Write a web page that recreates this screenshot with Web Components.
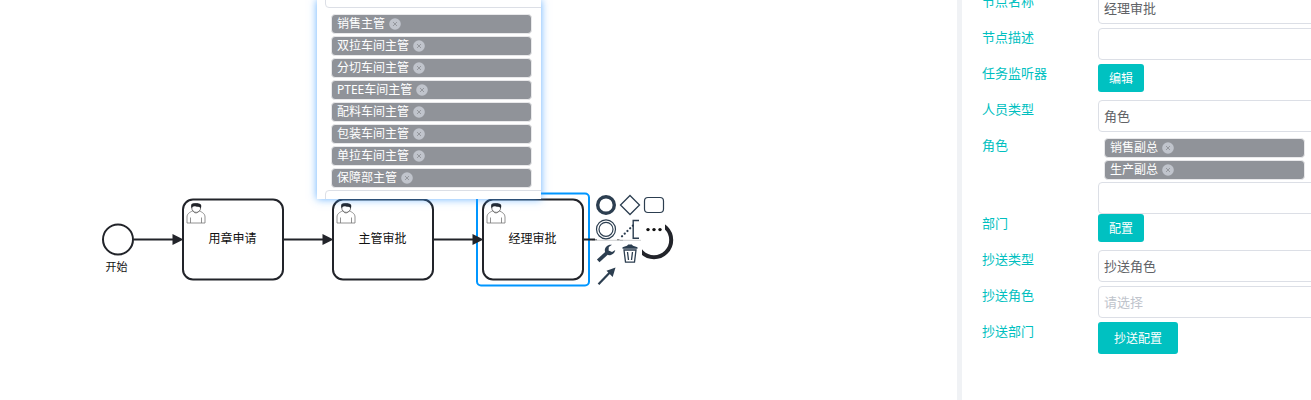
<!DOCTYPE html>
<html lang="zh">
<head>
<meta charset="utf-8">
<title>流程设计</title>
<style>
html,body{margin:0;height:400px;overflow:hidden;background:#fff;font-family:"Noto Sans","Noto Sans CJK SC",sans-serif}
</style>
</head>
<body>
<flow-designer></flow-designer>
<script>
const define = (name, css, html) => customElements.define(name, class extends HTMLElement {
  connectedCallback() {
    if (this.shadowRoot) return;
    const t = document.createElement('template');
    t.innerHTML = `<style>*{box-sizing:border-box}${css}</style>${typeof html === 'function' ? html(this) : html}`;
    this.attachShadow({mode: 'open'}).appendChild(t.content.cloneNode(true));
  }
});

define('role-tag', `
:host{display:flex;align-items:center;box-sizing:border-box;height:20px;width:201px;margin-bottom:2px;padding:0 5px;border:1px solid #e9e9eb;border-radius:4px;background:#909399;color:#fff;font-size:12px;line-height:18px;white-space:nowrap}
svg{width:12px;height:12px;margin-left:4px;flex:none}`,
`<slot></slot><svg viewBox="0 0 12 12"><circle cx="6" cy="6" r="5.800" fill="#c0c4cc"/><path d="M4 4l4 4M8 4l-4 4" stroke="#909399" stroke-width=".9"/></svg>`);

define('text-box', `
:host{display:flex;align-items:center;box-sizing:border-box;width:240px;height:32px;padding:0 5px;border:1px solid #dcdfe6;border-radius:4px;background:#fff;color:#606266;font-size:13px;line-height:18px}
:host([placeholder]){color:#c0c4cc}`, `<slot></slot>`);

define('teal-button', `
:host{display:inline-flex;align-items:center;justify-content:center;box-sizing:border-box;width:46px;height:28px;padding-top:2px;border-radius:3px;background:#00c1c1;color:#fff;font-size:12px;line-height:16px}
:host([large]){width:80px;height:32px}`, `<slot></slot>`);

define('form-row', `
:host{display:flex;height:36px;align-items:flex-start}
:host([tall]){height:78px}
.l{width:116px;flex:none;color:#00bfbf;font-size:13px;line-height:18px}
.c{flex:none;display:flex;flex-direction:column;align-items:flex-start}`,
el => `<div class="l">${el.getAttribute('label')}</div><div class="c"><slot></slot></div>`);

define('property-panel', `
:host{display:block;box-sizing:border-box;width:354px;height:400px;flex:none;border-left:5px solid #f0f2f5;padding-left:20px;background:#fff;overflow:hidden}
.rows{margin-top:-8px}
.tags{padding:2px 0 0 6px;height:46px}`,
`<div class="rows">
<form-row label="节点名称"><text-box>经理审批</text-box></form-row>
<form-row label="节点描述"><text-box></text-box></form-row>
<form-row label="任务监听器"><teal-button>编辑</teal-button></form-row>
<form-row label="人员类型"><text-box>角色</text-box></form-row>
<form-row label="角色" tall><div class="tags"><role-tag>销售副总</role-tag><role-tag>生产副总</role-tag></div><text-box></text-box></form-row>
<form-row label="部门"><teal-button>配置</teal-button></form-row>
<form-row label="抄送类型"><text-box>抄送角色</text-box></form-row>
<form-row label="抄送角色"><text-box placeholder>请选择</text-box></form-row>
<form-row label="抄送部门"><teal-button large>抄送配置</teal-button></form-row>
</div>`);

define('role-popup', `
:host{display:block;width:224px;height:199px;background:#fff;box-shadow:0 0 8px rgba(64,158,255,.8)}
.in{height:199px;overflow:hidden;padding-left:8px}
.first{margin-top:-24px}
.tags{padding:6px 0 0 6px;height:182px}`,
`<div class="in"><text-box class="first"></text-box><div class="tags">
<role-tag>销售主管</role-tag><role-tag>双拉车间主管</role-tag><role-tag>分切车间主管</role-tag><role-tag>PTEE车间主管</role-tag><role-tag>配料车间主管</role-tag><role-tag>包装车间主管</role-tag><role-tag>单拉车间主管</role-tag><role-tag>保障部主管</role-tag>
</div><text-box></text-box></div>`);

const task = (x, name) => `<g transform="translate(${x} 199.5)">
<rect width="100" height="80" rx="10" fill="#fff" stroke="#22242a" stroke-width="2"/>
<path d="M4 23.500v-6c0-3 2-4.400 6-6.300c1 3 5 3 6 0c4 1.900 6 3.300 6 6.300v6zM7.500 18v5.500M18.500 18v5.500" fill="#fff" stroke="#777" stroke-width=".8"/>
<circle cx="13.200" cy="8.500" r="4.400" fill="#fff" stroke="#555" stroke-width=".8"/>
<path d="M8.500 8.800C7 2.800 10.500 3.800 13.300 3.800C17 3.800 19.300 4.500 17.900 8.800C17 7 15.500 7.800 13 6.900C10.500 6.300 9.500 7 8.500 8.800z" fill="#22242a"/>
<text x="49.500" y="43.500" font-size="12" text-anchor="middle">${name}</text></g>`;
const line = (a, b) => `<path d="M${a} 239.500H${b}" stroke="#22242a" stroke-width="2"/>`;
const flow = (a, b) => `${line(a, b - 8)}<path d="M${b - 10.500} 234v11l11-5.500z" fill="#22242a"/>`;
const cell = (x, y) => `<rect x="${x}" y="${y}" width="22" height="22" fill="#fff"/>`;

define('flow-canvas', `
:host{display:block}
svg{display:block}`,
`<svg width="957" height="400" viewBox="0 0 957 400" fill="none">
<g fill="#111" font-family="Noto Sans CJK SC,sans-serif"><circle cx="118" cy="239.500" r="15" fill="#fff" stroke="#22242a" stroke-width="2"/>
<text x="116.500" y="271" font-size="11" text-anchor="middle">开始</text>
${task(183, '用章申请')}${task(333, '主管审批')}${task(483, '经理审批')}</g>
<rect x="477" y="193.500" width="112" height="92" rx="4" stroke="#0096ff" stroke-width="2"/>
${flow(134, 183)}${flow(284, 333)}${flow(434, 483)}${line(584, 595)}
<path d="M595 240.300H640" stroke="#22242a" stroke-opacity=".22" stroke-width="1"/><path d="M592 239.700h5M617 239.700h2.500" stroke="#22242a" stroke-opacity=".6"/>
<circle cx="654" cy="240" r="17.200" stroke="#22242a" stroke-width="4"/>
${[[595,194],[619,194],[643,194],[595,217],[619,217],[643,218],[595,242],[620,242],[595,266],[623,222]].map(p => cell(...p)).join('')}
<path d="M620 240.300H641" stroke="#22242a" stroke-opacity=".22"/>
<g stroke="#2c3e50">
<circle cx="606" cy="205" r="8.300" stroke-width="3.400"/>
<path d="M630 195.500l9.500 9.500-9.500 9.500-9.500-9.500z" stroke-width="1.300"/>
<rect x="644.500" y="197.500" width="19" height="15" rx="3.500" stroke-width="1.200"/>
<circle cx="606" cy="229.300" r="9.500" stroke-width="1.200"/><circle cx="606" cy="229.300" r="7" stroke-width="1.200"/>
<path d="M639 220.500h-5.800v17.700h5.800" stroke-width="1.400"/>
<path d="M622 236.300l11-10.800" stroke-width="2.200" stroke-linecap="round" stroke-dasharray=".1 3.700"/>
<path d="M598.500 284.300l12-12.500" stroke-width="2.200"/>
<path d="M624 250l1.500 12.200h9l1.500-12.200zM627.500 252l1 8M632.500 252l-1 8" stroke-width="1.300"/>
<path d="M598.200 260.800l8.500-7.600" stroke-width="3.800"/>
</g>
<path d="M615.500 267.500l-2.800 9.500-6.200-6.200z" fill="#2c3e50"/>
<path d="M622.500 248.800v-1.500l4.500-1.500 1.200-1.300h3.600l1.200 1.300 4.500 1.500v1.500z" fill="#2c3e50"/>
<path d="M612 244.800C607.500 243.800 603.500 248 605.200 252.300C607.300 257 614.300 255.800 615.300 250L612 252L608.600 250.500L608.800 247z" fill="#2c3e50"/>
<g fill="#111"><circle cx="648" cy="229.600" r="1.700"/><circle cx="654" cy="229.600" r="1.700"/><circle cx="660" cy="229.600" r="1.700"/></g>
</svg>`);

define('flow-designer', `
:host{display:flex;position:relative;width:1311px;height:400px;overflow:hidden;background:#fff}
flow-canvas{width:957px;flex:none}
role-popup{position:absolute;left:317px;top:0}`,
`<flow-canvas></flow-canvas><property-panel></property-panel><role-popup></role-popup>`);
</script>
</body>
</html>
